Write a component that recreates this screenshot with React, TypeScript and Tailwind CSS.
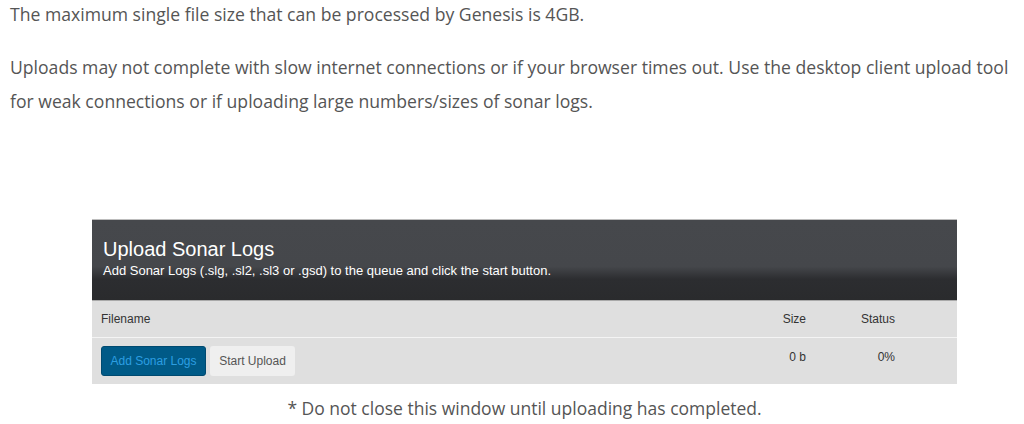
import { FunctionComponent } from "react";

const bodyFont = { fontFamily: "'Open Sans', Lato, sans-serif" };

const App: FunctionComponent = () => {
  return (
    <div className="w-[1024px] h-[424px] overflow-hidden bg-white">
      <div
        className="pl-[10px] -mt-[3px] text-[17.6px] leading-[34px] text-[#555555]"
        style={bodyFont}
      >
        <p>The maximum single file size that can be processed by Genesis is 4GB.</p>
        <p className="mt-[19px]">
          Uploads may not complete with slow internet connections or if your browser times out. Use the desktop client upload tool for weak connections or if uploading large numbers/sizes of sonar logs.
        </p>
      </div>

      <div className="ml-[92px] mt-[101px] w-[865px] font-['Liberation_Sans',Arial,sans-serif]">
        <div className="h-[81px] px-[11px] pt-[16px] text-white border-t border-[#bdbdbd] bg-[linear-gradient(to_bottom,#46484c_0%,#45474b_58%,#2c2d30_74%,#2a2b2d_100%)]">
          <h3 className="text-[20px] leading-[26px]">Upload Sonar Logs</h3>
          <p className="text-[13px] leading-[18px]">
            Add Sonar Logs (.slg, .sl2, .sl3 or .gsd) to the queue and click the start button.
          </p>
        </div>

        <div className="flex items-center h-[37px] bg-[#dfdfdf] border-t border-[#a9a9a9] text-[12px] text-[#333333] pr-[62px]">
          <div className="flex-1 pl-[9px]">Filename</div>
          <div className="w-[60px] text-right">Size</div>
          <div className="w-[89px] text-right">Status</div>
        </div>

        <div className="flex items-center h-[47px] bg-[#dfdfdf] border-t border-[#f4f4f4] text-[12px] text-[#333333] pr-[62px]">
          <div className="flex-1 flex gap-[4px] pl-[9px]">
            <button className="w-[105px] h-[30px] rounded-[3px] bg-[#005a87] border border-[#004a70] text-[#2c9ee2] text-[12px]">
              Add Sonar Logs
            </button>
            <button className="w-[85px] h-[30px] rounded-[3px] bg-[#efefef] text-[#555555] text-[12px]">
              Start Upload
            </button>
          </div>
          <div className="w-[60px] text-right -mt-[8px]">0 b</div>
          <div className="w-[89px] text-right -mt-[8px]">0%</div>
        </div>

        <p
          className="text-center text-[17.5px] leading-[24px] text-[#555555] mt-[12px]"
          style={bodyFont}
        >
          * Do not close this window until uploading has completed.
        </p>
      </div>
    </div>
  );
};

export default App;
